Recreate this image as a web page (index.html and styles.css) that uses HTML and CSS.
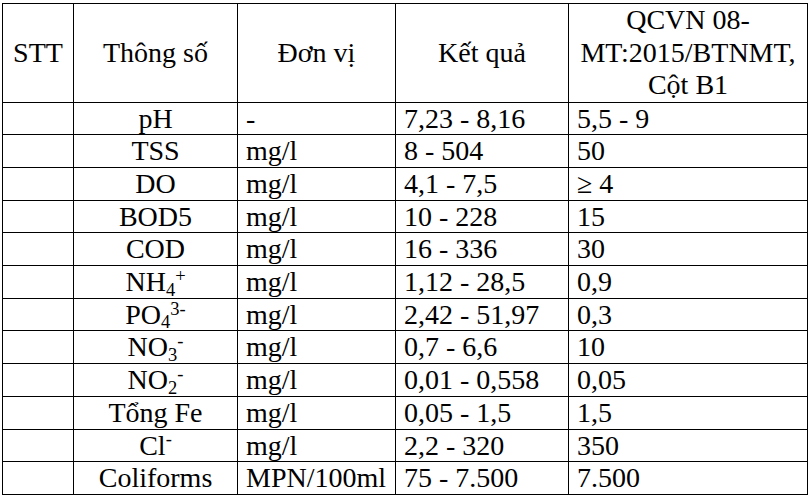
FILE: index.html
```html
<!DOCTYPE html>
<html lang="vi">
<head>
<meta charset="utf-8">
<title>Bảng kết quả</title>
<link rel="stylesheet" href="styles.css">
</head>
<body>
<table class="data">
  <colgroup>
    <col class="c-stt">
    <col class="c-param">
    <col class="c-unit">
    <col class="c-result">
    <col class="c-std">
  </colgroup>
  <thead>
    <tr>
      <th>STT</th>
      <th>Thông số</th>
      <th>Đơn vị</th>
      <th>Kết quả</th>
      <th>QCVN 08-<br>MT:2015/BTNMT,<br>Cột B1</th>
    </tr>
  </thead>
  <tbody>
    <tr><td></td><td class="ctr">pH</td><td>-</td><td>7,23 - 8,16</td><td>5,5 - 9</td></tr>
    <tr><td></td><td class="ctr">TSS</td><td>mg/l</td><td>8 - 504</td><td>50</td></tr>
    <tr><td></td><td class="ctr">DO</td><td>mg/l</td><td>4,1 - 7,5</td><td>≥ 4</td></tr>
    <tr><td></td><td class="ctr">BOD5</td><td>mg/l</td><td>10 - 228</td><td>15</td></tr>
    <tr><td></td><td class="ctr">COD</td><td>mg/l</td><td>16 - 336</td><td>30</td></tr>
    <tr><td></td><td class="ctr">NH<sub>4</sub><sup>+</sup></td><td>mg/l</td><td>1,12 - 28,5</td><td>0,9</td></tr>
    <tr><td></td><td class="ctr">PO<sub>4</sub><sup>3-</sup></td><td>mg/l</td><td>2,42 - 51,97</td><td>0,3</td></tr>
    <tr><td></td><td class="ctr">NO<sub>3</sub><sup>-</sup></td><td>mg/l</td><td>0,7 - 6,6</td><td>10</td></tr>
    <tr><td></td><td class="ctr">NO<sub>2</sub><sup>-</sup></td><td>mg/l</td><td>0,01 - 0,558</td><td>0,05</td></tr>
    <tr><td></td><td class="ctr">Tổng Fe</td><td>mg/l</td><td>0,05 - 1,5</td><td>1,5</td></tr>
    <tr><td></td><td class="ctr">Cl<sup>-</sup></td><td>mg/l</td><td>2,2 - 320</td><td>350</td></tr>
    <tr><td></td><td class="ctr">Coliforms</td><td>MPN/100ml</td><td>75 - 7.500</td><td>7.500</td></tr>
  </tbody>
</table>
</body>
</html>
```
FILE: styles.css
```css
html, body {
  margin: 0;
  padding: 0;
  background: #ffffff;
}

body {
  padding: 3px 0 0 2px;
  font-family: "Liberation Serif", "Times New Roman", serif;
  font-size: 28px;
  color: #000;
}

.data {
  border-collapse: collapse;
  table-layout: fixed;
  width: 805px;
}

.c-stt { width: 71px; }
.c-param { width: 164px; }
.c-unit { width: 158px; }
.c-result { width: 173px; }
.c-std { width: 239px; }

.data th,
.data td {
  border: 1px solid #000;
  padding: 0 8px;
  white-space: nowrap;
}

.data th {
  font-weight: normal;
  text-align: center;
  vertical-align: middle;
  line-height: 32.6px;
  padding: 0 2px;
}

.data td {
  text-align: left;
  line-height: 31.67px;
  height: 31.67px;
}

.data td.ctr {
  text-align: center;
}

.data sub,
.data sup {
  font-size: 0.66em;
  line-height: 0;
  position: relative;
  vertical-align: baseline;
}

.data sub { top: 0.25em; }
.data sup { top: -0.5em; }
```
